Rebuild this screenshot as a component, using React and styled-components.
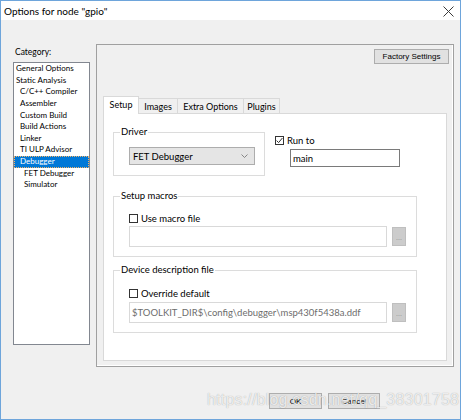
import React from 'react'
import styled, { createGlobalStyle } from 'styled-components'

const GlobalStyle = createGlobalStyle`
  html, body { margin: 0; padding: 0; background: #fff; }
  * { box-sizing: border-box; }
`

const ui = `Lato, "Noto Sans", sans-serif`
const classic = `"Liberation Sans", Arial, sans-serif`

const categories = [
  { label: 'General Options', level: 0 },
  { label: 'Static Analysis', level: 0 },
  { label: 'C/C++ Compiler', level: 1 },
  { label: 'Assembler', level: 1 },
  { label: 'Custom Build', level: 1 },
  { label: 'Build Actions', level: 1 },
  { label: 'Linker', level: 1 },
  { label: 'TI ULP Advisor', level: 1 },
  { label: 'Debugger', level: 1, selected: true },
  { label: 'FET Debugger', level: 2 },
  { label: 'Simulator', level: 2 },
]

const tabs = [
  { label: 'Setup', width: 36 },
  { label: 'Images', width: 40 },
  { label: 'Extra Options', width: 67 },
  { label: 'Plugins', width: 37 },
]

function CloseIcon() {
  return (
    <svg width="11" height="11" viewBox="0 0 11 11">
      <path d="M0.5 0.5 L10.5 10.5 M10.5 0.5 L0.5 10.5" stroke="#3a3a3a" strokeWidth="1" />
    </svg>
  )
}

function Chevron() {
  return (
    <svg width="7" height="4" viewBox="0 0 7 4">
      <path d="M0.5 0.5 L3.5 3.5 L6.5 0.5" stroke="#7a7a7a" strokeWidth="0.9" fill="none" />
    </svg>
  )
}

function Check({ checked }) {
  return (
    <CheckBox>
      {checked && (
        <svg width="7" height="7" viewBox="0 0 7 7">
          <path d="M0.6 3.6 L2.6 5.6 L6.4 1" stroke="#333" strokeWidth="1" fill="none" />
        </svg>
      )}
    </CheckBox>
  )
}

export default function App() {
  return (
    <>
      <GlobalStyle />
      <Window>
        <TitleBar>
          <Title>Options for node "gpio"</Title>
          <CloseBtn><CloseIcon /></CloseBtn>
        </TitleBar>
        <Body>
          <MainRow>
            <LeftCol>
              <CategoryLabel>Category:</CategoryLabel>
              <List>
                {categories.map((c) => (
                  <ListItem key={c.label} $level={c.level} $selected={c.selected}>
                    {c.label}
                  </ListItem>
                ))}
              </List>
            </LeftCol>
            <Panel>
              <PanelTop>
                <SmallButton>Factory Settings</SmallButton>
              </PanelTop>
              <TabArea>
                <TabStrip>
                  {tabs.map((t, i) => (
                    <Tab key={t.label} $active={i === 0} $w={t.width}>{t.label}</Tab>
                  ))}
                </TabStrip>
                <TabContent>
                  <TopRow>
                    <Group $width={152} $pb={10}>
                      <Legend>Driver</Legend>
                      <Select>
                        <span>FET Debugger</span>
                        <Chevron />
                      </Select>
                    </Group>
                    <RunCol>
                      <CheckRow>
                        <Check checked />
                        <span>Run to</span>
                      </CheckRow>
                      <RunInput>main</RunInput>
                    </RunCol>
                  </TopRow>
                  <Group $width={304} $mt={14} $pb={9}>
                    <Legend>Setup macros</Legend>
                    <CheckRow $mt={10}>
                      <Check />
                      <span>Use macro file</span>
                    </CheckRow>
                    <FileRow $mt={2}>
                      <FileInput />
                      <BrowseBtn>...</BrowseBtn>
                    </FileRow>
                  </Group>
                  <Group $width={304} $mt={7} $pb={9}>
                    <Legend>Device description file</Legend>
                    <CheckRow $mt={11}>
                      <Check />
                      <span>Override default</span>
                    </CheckRow>
                    <FileRow $mt={3}>
                      <FileInput>$TOOLKIT_DIR$\config\debugger\msp430f5438a.ddf</FileInput>
                      <BrowseBtn>...</BrowseBtn>
                    </FileRow>
                  </Group>
                </TabContent>
              </TabArea>
            </Panel>
          </MainRow>
          <Footer>
            <DialogButton $w={53}>OK</DialogButton>
            <DialogButton $w={52}>Cancel</DialogButton>
          </Footer>
        </Body>
        <Watermark>https://blog.csdn.net/qq_38301758</Watermark>
      </Window>
    </>
  )
}

const Window = styled.div`
  position: relative;
  width: 461px;
  height: 420px;
  border: 1px solid #6ea5db;
  display: flex;
  flex-direction: column;
  background: #f0f0f0;
  overflow: hidden;
`

const TitleBar = styled.div`
  height: 19px;
  background: #fff;
  display: flex;
  align-items: center;
  justify-content: space-between;
  padding: 0 6px 0 3px;
`

const Title = styled.div`
  font-family: ${ui};
  font-size: 10px;
  color: #000;
`

const CloseBtn = styled.div`
  display: flex;
  align-items: center;
  margin-top: 1px;
`

const Body = styled.div`
  flex: 1;
  display: flex;
  flex-direction: column;
`

const MainRow = styled.div`
  display: flex;
  margin-top: 24px;
  padding-left: 12px;
`

const LeftCol = styled.div`
  width: 77px;
  display: flex;
  flex-direction: column;
`

const CategoryLabel = styled.div`
  font-family: ${ui};
  font-size: 8.5px;
  line-height: 12px;
  height: 12px;
  margin-top: 2px;
  margin-bottom: 4px;
  padding-left: 2px;
`

const List = styled.div`
  height: 283px;
  background: #fff;
  border: 1px solid #828790;
  padding-top: 0.2px;
`

const ListItem = styled.div`
  font-family: ${ui};
  font-size: 8px;
  line-height: 11.6px;
  height: 11.6px;
  white-space: nowrap;
  padding-left: ${(p) => 2 + p.$level * 4}px;
  background: ${(p) => (p.$selected ? '#0078d7' : 'transparent')};
  color: ${(p) => (p.$selected ? '#fff' : '#000')};
  outline: ${(p) => (p.$selected ? '1px dotted #f2b36a' : 'none')};
  outline-offset: -1px;
`

const Panel = styled.div`
  margin-left: 6px;
  width: 358px;
  height: 323px;
  border: 1px solid #a0a0a0;
  box-shadow: inset -1px -1px 0 #fff;
  padding: 4px 4px 5px 6px;
  display: flex;
  flex-direction: column;
`

const PanelTop = styled.div`
  display: flex;
  justify-content: flex-end;
`

const SmallButton = styled.div`
  width: 75px;
  height: 15px;
  background: #e1e1e1;
  border: 1px solid #adadad;
  font-family: ${classic};
  font-size: 8px;
  display: flex;
  align-items: center;
  justify-content: center;
  color: #000;
`

const TabArea = styled.div`
  flex: 1;
  margin-top: 32px;
  margin-right: 2px;
  display: flex;
  flex-direction: column;
`

const TabStrip = styled.div`
  height: 17px;
  display: flex;
  align-items: flex-end;
  position: relative;
  z-index: 1;
`

const Tab = styled.div`
  width: ${(p) => p.$w}px;
  height: ${(p) => (p.$active ? '18px' : '15px')};
  margin-bottom: ${(p) => (p.$active ? '-1px' : '0')};
  margin-left: -1px;
  padding-bottom: ${(p) => (p.$active ? '3px' : '0')};
  background: ${(p) => (p.$active ? '#fff' : '#f0f0f0')};
  border: 1px solid #d9d9d9;
  border-bottom: none;
  font-family: ${ui};
  font-size: 9px;
  display: flex;
  align-items: center;
  justify-content: center;
  color: #000;
  &:first-child { margin-left: 0; }
`

const TabContent = styled.div`
  flex: 1;
  background: #fff;
  border: 1px solid #d9d9d9;
  padding: 12px 0 0 9px;
  display: flex;
  flex-direction: column;
`

const TopRow = styled.div`
  display: flex;
`

const Group = styled.fieldset`
  width: ${(p) => p.$width}px;
  margin: ${(p) => p.$mt || 0}px 0 0 0;
  padding: 0 0 ${(p) => p.$pb}px 15px;
  border: 1px solid #dcdcdc;
  min-width: 0;
`

const Legend = styled.legend`
  font-family: ${ui};
  font-size: 9.5px;
  line-height: 12px;
  padding: 0 1px;
  margin-left: -9px;
  color: #000;
`

const Select = styled.div`
  margin-top: 9px;
  width: 126px;
  height: 18px;
  background: #e5e5e5;
  border: 1px solid #adadad;
  display: flex;
  align-items: center;
  justify-content: space-between;
  padding: 0 6px 0 3px;
  font-family: ${ui};
  font-size: 9.5px;
  color: #000;
`

const RunCol = styled.div`
  margin-left: 10px;
  display: flex;
  flex-direction: column;
`

const CheckRow = styled.div`
  margin-top: ${(p) => (p.$mt === undefined ? 8 : p.$mt)}px;
  height: 12px;
  display: flex;
  align-items: center;
  gap: 3px;
  font-family: ${ui};
  font-size: 9.5px;
  color: #000;
`

const CheckBox = styled.div`
  width: 9px;
  height: 9px;
  border: 1px solid #333;
  background: #fff;
  display: flex;
  align-items: center;
  justify-content: center;
`

const RunInput = styled.div`
  margin: 3px 0 0 15px;
  width: 110px;
  height: 18px;
  border: 1px solid #7a7a7a;
  background: #fff;
  padding-left: 2px;
  display: flex;
  align-items: center;
  font-family: ${ui};
  font-size: 9.5px;
  color: #000;
`

const FileRow = styled.div`
  margin-top: ${(p) => p.$mt}px;
  display: flex;
  align-items: center;
  gap: 5px;
`

const FileInput = styled.div`
  width: 258px;
  height: 21px;
  border: 1px solid #d9d9d9;
  background: #fff;
  padding-left: 2px;
  display: flex;
  align-items: center;
  font-family: ${ui};
  font-size: 9.5px;
  color: #6d6d6d;
  white-space: nowrap;
`

const BrowseBtn = styled.div`
  width: 14px;
  height: 19px;
  background: #cccccc;
  border: 1px solid #bfbfbf;
  font-family: ${classic};
  font-size: 7px;
  color: #8a8a8a;
  display: flex;
  align-items: flex-end;
  justify-content: center;
  padding-bottom: 4px;
`

const Footer = styled.div`
  margin-top: 26px;
  display: flex;
  justify-content: flex-end;
  gap: 6px;
  padding-right: 80px;
`

const DialogButton = styled.div`
  width: ${(p) => p.$w}px;
  height: 16px;
  background: #e1e1e1;
  border: 1px solid #adadad;
  font-family: ${classic};
  font-size: 8px;
  color: #000;
  display: flex;
  align-items: center;
  justify-content: center;
`

const Watermark = styled.div`
  position: absolute;
  left: 206px;
  top: 390px;
  font-family: ${classic};
  font-size: 16px;
  letter-spacing: 0.2px;
  color: rgba(255, 255, 255, 0.8);
  text-shadow: 0 0 1px rgba(0, 0, 0, 0.35);
  white-space: nowrap;
  pointer-events: none;
`
